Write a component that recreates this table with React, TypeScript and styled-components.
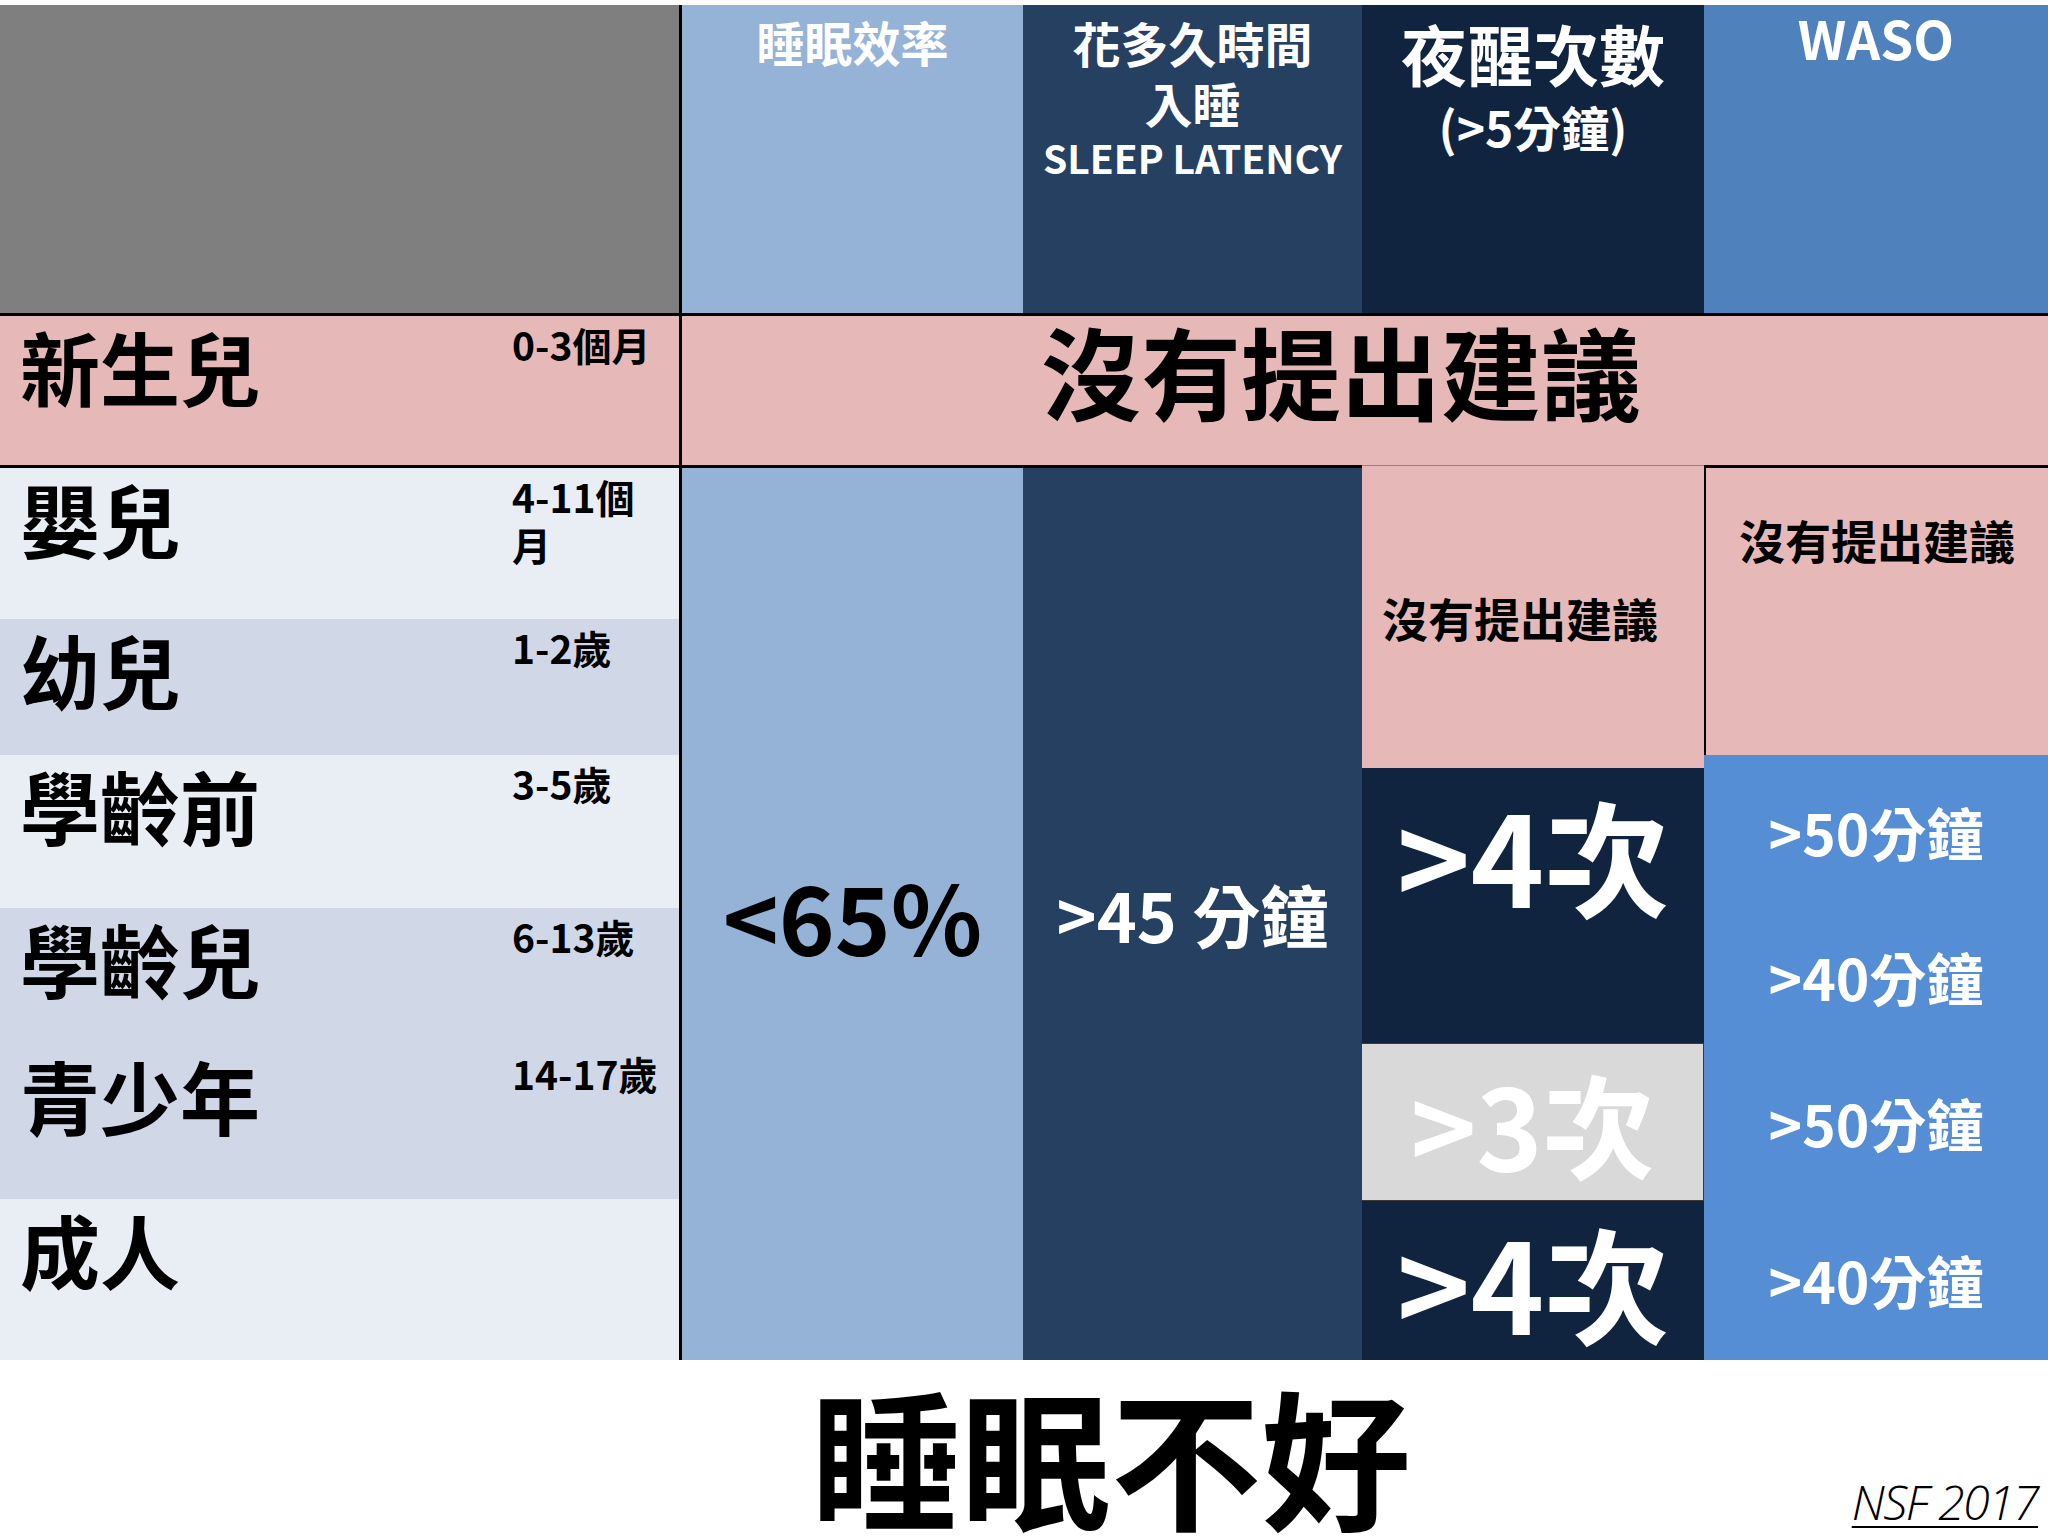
import React from "react";
import styled, { createGlobalStyle } from "styled-components";

const GlobalStyle = createGlobalStyle`
  html, body {
    margin: 0;
    padding: 0;
    background: #ffffff;
    overflow: hidden;
  }
  body {
    font-family: "Noto Sans CJK TC", "Noto Sans CJK SC", "Noto Sans", sans-serif;
    font-weight: 700;
  }
  * { box-sizing: border-box; }
`;

const C = {
  gray: "#7f7f7f",
  pink: "#e6b9b8",
  light: "#e9edf4",
  dark: "#d0d8e8",
  eff: "#95b3d7",
  lat: "#254061",
  wake: "#10243f",
  wasoHead: "#4f81bd",
  waso: "#558ed5",
  box: "#d9d9d9",
  line: "#000000",
};

const Page = styled.div`
  width: 2048px;
  height: 1536px;
  padding-top: 5px;
  display: flex;
  flex-direction: column;
`;

const Table = styled.div`
  display: grid;
  grid-template-columns: 682px 341px 339px 342px 344px;
  grid-template-rows: 311px 149px 895px;
`;

const Corner = styled.div`
  background: ${C.gray};
  border-right: 3px solid ${C.line};
  border-bottom: 3px solid ${C.line};
`;

const HeaderCell = styled.div<{ $bg: string }>`
  background: ${(p) => p.$bg};
  border-bottom: 3px solid ${C.line};
  color: #ffffff;
  text-align: center;
  padding-top: 7px;
  display: flex;
  flex-direction: column;
  align-items: center;
`;

const HeaderLine = styled.div<{ $size: number; $lh: number; $shift?: number }>`
  font-size: ${(p) => p.$size}px;
  line-height: ${(p) => p.$lh}px;
  ${(p) => (p.$shift ? `margin-top: ${p.$shift}px;` : "")}
  white-space: nowrap;
`;

const AgeRow = styled.div<{ $bg: string; $h?: number }>`
  background: ${(p) => p.$bg};
  ${(p) => (p.$h ? `height: ${p.$h}px;` : "")}
  display: grid;
  grid-template-columns: 492px 150px;
  align-items: start;
  padding-left: 20px;
`;

const NewbornRow = styled(AgeRow)`
  border-right: 3px solid ${C.line};
`;

const Name = styled.div`
  font-size: 80px;
  line-height: 96px;
  padding-top: 1px;
  color: #000;
  white-space: nowrap;
`;

const Age = styled.div`
  font-size: 39px;
  line-height: 48px;
  padding-top: 4px;
  color: #000;
`;

const Banner = styled.div`
  grid-column: 2 / span 4;
  background: ${C.pink};
  display: flex;
  justify-content: center;
  align-items: flex-start;
  padding-top: 4px;
  padding-right: 48px;
  font-size: 100px;
  line-height: 100px;
  color: #000;
  white-space: nowrap;
`;

const LeftStack = styled.div`
  border-top: 3px solid ${C.line};
  border-right: 3px solid ${C.line};
  display: flex;
  flex-direction: column;
`;

const ValueCell = styled.div<{ $bg: string; $color: string; $size: number }>`
  background: ${(p) => p.$bg};
  border-top: 3px solid ${C.line};
  color: ${(p) => p.$color};
  font-size: ${(p) => p.$size}px;
  line-height: 1;
  display: flex;
  align-items: center;
  justify-content: center;
  white-space: nowrap;
`;

const Stack = styled.div`
  display: flex;
  flex-direction: column;
`;

const StackCell = styled.div<{
  $bg: string;
  $h: number;
  $color?: string;
  $size: number;
  $top?: number;
  $right?: number;
  $borderTop?: string;
  $borderLeft?: string;
  $frame?: boolean;
}>`
  background: ${(p) => p.$bg};
  height: ${(p) => p.$h}px;
  flex: none;
  color: ${(p) => p.$color || "#ffffff"};
  font-size: ${(p) => p.$size}px;
  line-height: ${(p) => p.$size}px;
  display: flex;
  justify-content: center;
  align-items: ${(p) => (p.$top !== undefined ? "flex-start" : "center")};
  padding-top: ${(p) => (p.$top !== undefined ? p.$top : 0)}px;
  padding-right: ${(p) => p.$right || 0}px;
  white-space: nowrap;
  ${(p) => (p.$borderTop ? `border-top: ${p.$borderTop};` : "")}
  ${(p) => (p.$borderLeft ? `border-left: ${p.$borderLeft};` : "")}
  ${(p) => (p.$frame ? `border: 1px solid #3a3a3a; border-left: none;` : "")}
`;

const Footer = styled.div`
  height: 176px;
  display: flex;
  align-items: flex-start;
  overflow: hidden;
`;

const Title = styled.div`
  margin-left: 811px;
  padding-top: 19px;
  font-size: 150px;
  line-height: 150px;
  font-weight: 700;
  color: #000;
  white-space: nowrap;
`;

const Source = styled.div`
  margin-left: auto;
  margin-right: 10px;
  margin-top: 118px;
  font-family: "Open Sans", "Noto Sans", sans-serif;
  font-style: italic;
  font-weight: 300;
  font-size: 48px;
  line-height: 48px;
  letter-spacing: -1.5px;
  color: #000;
  text-decoration: underline;
  text-decoration-thickness: 2px;
  text-underline-offset: 6px;
  white-space: nowrap;
`;

const ageRows = [
  { name: "嬰兒", age: "4-11個月", bg: C.light, h: 151 },
  { name: "幼兒", age: "1-2歲", bg: C.dark, h: 136 },
  { name: "學齡前", age: "3-5歲", bg: C.light, h: 153 },
  { name: "學齡兒", age: "6-13歲", bg: C.dark, h: 137 },
  { name: "青少年", age: "14-17歲", bg: C.dark, h: 154 },
  { name: "成人", age: "", bg: C.light, h: 161 },
];

const wasoRows = [
  { text: ">50分鐘", h: 153 },
  { text: ">40分鐘", h: 137 },
  { text: ">50分鐘", h: 154 },
  { text: ">40分鐘", h: 161 },
];

export default function App() {
  return (
    <>
      <GlobalStyle />
      <Page>
        <Table>
          <Corner />
          <HeaderCell $bg={C.eff}>
            <HeaderLine $size={48} $lh={58}>睡眠效率</HeaderLine>
          </HeaderCell>
          <HeaderCell $bg={C.lat}>
            <HeaderLine $size={48} $lh={60}>花多久時間</HeaderLine>
            <HeaderLine $size={48} $lh={60}>入睡</HeaderLine>
            <HeaderLine $size={39} $lh={50}>SLEEP LATENCY</HeaderLine>
          </HeaderCell>
          <HeaderCell $bg={C.wake}>
            <HeaderLine $size={66} $lh={80}>夜醒次數</HeaderLine>
            <HeaderLine $size={48} $lh={68}>(&gt;5分鐘)</HeaderLine>
          </HeaderCell>
          <HeaderCell $bg={C.wasoHead}>
            <HeaderLine $size={53} $lh={51}>WASO</HeaderLine>
          </HeaderCell>

          <NewbornRow $bg={C.pink}>
            <Name>新生兒</Name>
            <Age>0-3個月</Age>
          </NewbornRow>
          <Banner>沒有提出建議</Banner>

          <LeftStack>
            {ageRows.map((r) => (
              <AgeRow key={r.name} $bg={r.bg} $h={r.h}>
                <Name>{r.name}</Name>
                <Age>{r.age}</Age>
              </AgeRow>
            ))}
          </LeftStack>
          <ValueCell $bg={C.eff} $color="#000000" $size={95}>
            &lt;65%
          </ValueCell>
          <ValueCell $bg={C.lat} $color="#ffffff" $size={68}>
            &gt;45 分鐘
          </ValueCell>
          <Stack>
            <StackCell
              $bg={C.pink}
              $h={303}
              $color="#000000"
              $size={46}
              $right={26}
              $borderTop="1px solid #9a8080"
            >
              沒有提出建議
            </StackCell>
            <StackCell $bg={C.wake} $h={275} $size={125} $top={23}>
              &gt;4次
            </StackCell>
            <StackCell $bg={C.box} $h={158} $size={112} $frame>
              &gt;3次
            </StackCell>
            <StackCell $bg={C.wake} $h={159} $size={125}>
              &gt;4次
            </StackCell>
          </Stack>
          <Stack>
            <StackCell
              $bg={C.pink}
              $h={290}
              $color="#000000"
              $size={46}
              $top={48}
              $borderTop={`3px solid ${C.line}`}
              $borderLeft={`2px solid ${C.line}`}
            >
              沒有提出建議
            </StackCell>
            {wasoRows.map((r, i) => (
              <StackCell key={i} $bg={C.waso} $h={r.h} $size={57}>
                {r.text}
              </StackCell>
            ))}
          </Stack>
        </Table>
        <Footer>
          <Title>睡眠不好</Title>
          <Source>NSF 2017</Source>
        </Footer>
      </Page>
    </>
  );
}
